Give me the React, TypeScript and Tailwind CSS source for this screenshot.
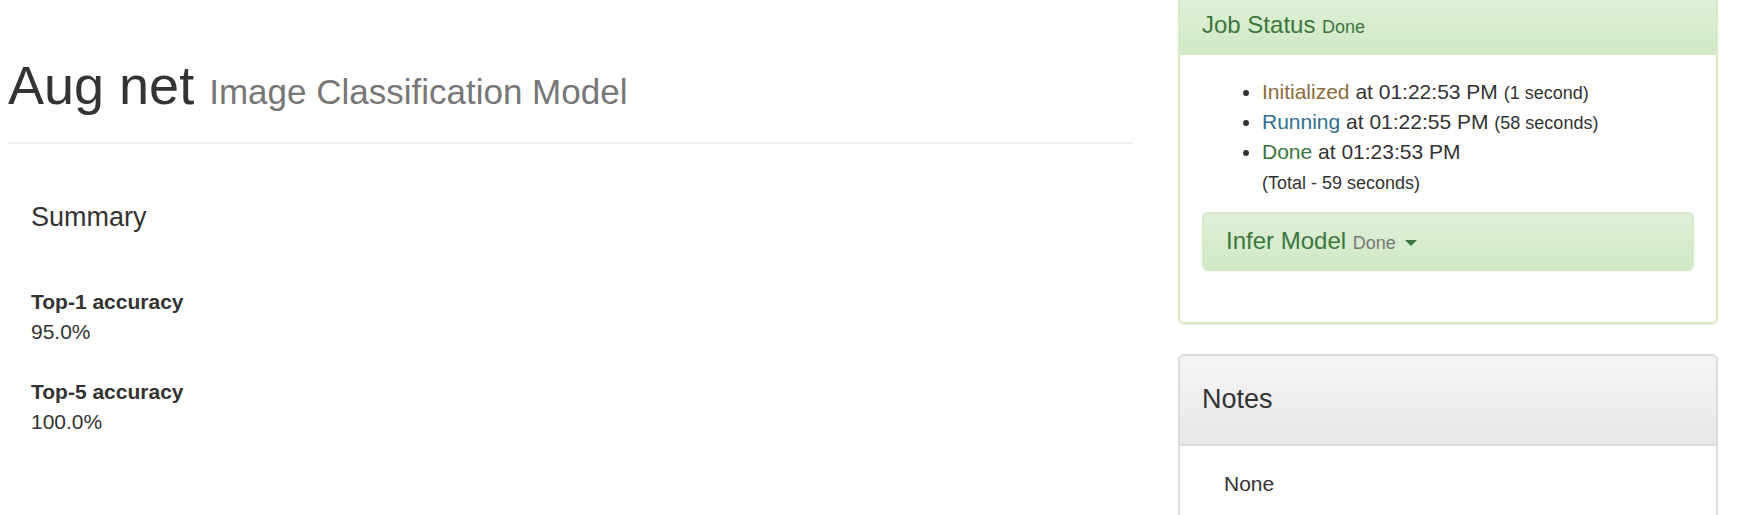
import React from "react";

const font = { fontFamily: '"Liberation Sans", Arial, Helvetica, sans-serif' };

function Caret() {
  return (
    <span className="inline-block align-middle ml-[3px] w-0 h-0 border-t-[6px] border-t-[#3c763d] border-l-[6px] border-l-transparent border-r-[6px] border-r-transparent" />
  );
}

export default function App() {
  return (
    <div
      className="w-[1752px] h-[515px] overflow-hidden bg-white text-[#333] flex items-start"
      style={font}
    >
      {/* Left column */}
      <div className="ml-[8px] w-[1125px] shrink-0">
        <div className="pt-[56px] pb-[27px] border-b-2 border-[#eeeeee]">
          <h1 className="text-[54px] leading-[59px] font-normal text-[#333]">
            Aug net{" "}
            <span className="text-[35px] leading-none text-[#777]">Image Classification Model</span>
          </h1>
        </div>
        <div className="pl-[23px]">
          <h4 className="mt-[58px] text-[27px] leading-[30px] font-normal text-[#333]">Summary</h4>
          <dl className="mt-[55px] text-[21px] leading-[30px]">
            <dt className="font-bold">Top-1 accuracy</dt>
            <dd>95.0%</dd>
            <dt className="font-bold mt-[30px]">Top-5 accuracy</dt>
            <dd>100.0%</dd>
          </dl>
        </div>
      </div>

      {/* Right column */}
      <div className="ml-[45px] w-[540px] shrink-0 -mt-[4px]">
        {/* Job Status panel */}
        <div className="border-2 border-[#d6e9c6] rounded-[6px] bg-white shadow-[0_1px_1px_rgba(0,0,0,0.05)]">
          <div className="pt-[14px] pb-[15px] px-[22px] bg-gradient-to-b from-[#dff0d8] to-[#d0e9c6] border-b-2 border-[#d6e9c6] rounded-t-[4px]">
            <h3 className="text-[24px] leading-[26px] font-normal text-[#3c763d]">
              Job Status <span className="text-[18px] leading-none">Done</span>
            </h3>
          </div>
          <div className="pt-[22px] pb-[22px] px-[22px]">
            <ul className="list-disc pl-[60px] text-[21px] leading-[30px] mb-[15px] marker:text-[#333]">
              <li>
                <span className="text-[#8a6d3b]">Initialized</span> at 01:22:53 PM{" "}
                <small className="text-[18px] leading-none">(1 second)</small>
              </li>
              <li>
                <span className="text-[#31708f]">Running</span> at 01:22:55 PM{" "}
                <small className="text-[18px] leading-none">(58 seconds)</small>
              </li>
              <li>
                <span className="text-[#3c763d]">Done</span> at 01:23:53 PM
                <br />
                <small className="text-[18px] leading-none">(Total - 59 seconds)</small>
              </li>
            </ul>
            <div className="mb-[29px] border-2 border-[#d6e9c6] rounded-[6px] shadow-[0_1px_2px_rgba(0,0,0,0.06)]">
              <div className="pt-[14px] pb-[15px] px-[22px] bg-gradient-to-b from-[#dff0d8] to-[#d0e9c6] rounded-[4px]">
                <h4 className="text-[24px] leading-[26px] font-normal text-[#3c763d]">
                  Infer Model <span className="text-[18px] leading-none text-[#777]">Done</span> <Caret />
                </h4>
              </div>
            </div>
          </div>
        </div>

        {/* Notes panel */}
        <div className="mt-[30px] border-2 border-[#dddddd] rounded-[6px] bg-white shadow-[0_1px_1px_rgba(0,0,0,0.05)]">
          <div className="pt-[28px] pb-[30px] px-[22px] bg-gradient-to-b from-[#f5f5f5] to-[#e8e8e8] border-b-2 border-[#dddddd] rounded-t-[4px]">
            <h4 className="text-[27px] leading-[30px] font-normal text-[#333]">Notes</h4>
          </div>
          <div className="pt-[23px] pb-[22px] pl-[44px] pr-[22px] text-[21px] leading-[30px]">
            None
          </div>
        </div>
      </div>
    </div>
  );
}
